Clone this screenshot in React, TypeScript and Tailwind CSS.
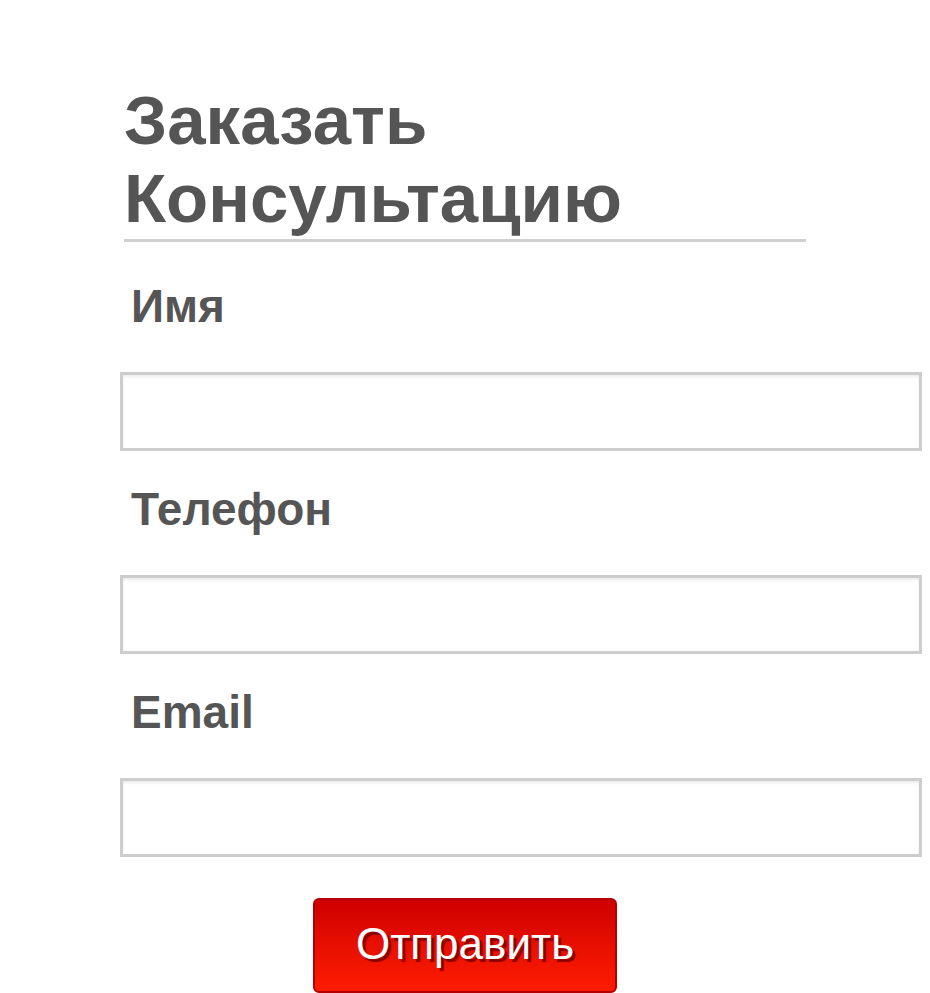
const FIELDS = ['Имя', 'Телефон', 'Email']

export default function App() {
  return (
    <div className="min-h-[993px] w-[930px] bg-white font-['Liberation_Sans',Arial,sans-serif] text-[#555555]">
      <form className="flex flex-col pt-[82px] pl-[120px] pr-[8px]" onSubmit={(e) => e.preventDefault()}>
        <h2 className="ml-[4px] w-[682px] border-b-[3px] border-[#d0d0d0] pb-[1px] text-[69px] font-bold leading-[78px]">
          Заказать Консультацию
        </h2>

        <div className="mt-[38px] flex flex-col">
          {FIELDS.map((label) => (
            <div key={label} className="flex flex-col pb-[32px]">
              <label className="ml-[11px] h-[52px] text-[46px] font-bold leading-[52px]">{label}</label>
              <input
                type="text"
                className="mt-[40px] h-[79px] w-full border-[3px] border-[#cdcdcd] bg-white shadow-[inset_0_2px_3px_rgba(0,0,0,0.08)] outline-none"
              />
            </div>
          ))}
        </div>
      </form>

      <div className="mt-[9px] flex justify-center">
        <button
          type="submit"
          className="h-[95px] w-[304px] rounded-[6px] border-2 border-[#b40000] bg-gradient-to-b from-[#cf0000] to-[#ff1c00] pb-[4px] text-[44px] leading-none text-white [text-shadow:3px_3px_1px_#8a0000]"
        >
          Отправить
        </button>
      </div>
    </div>
  )
}
